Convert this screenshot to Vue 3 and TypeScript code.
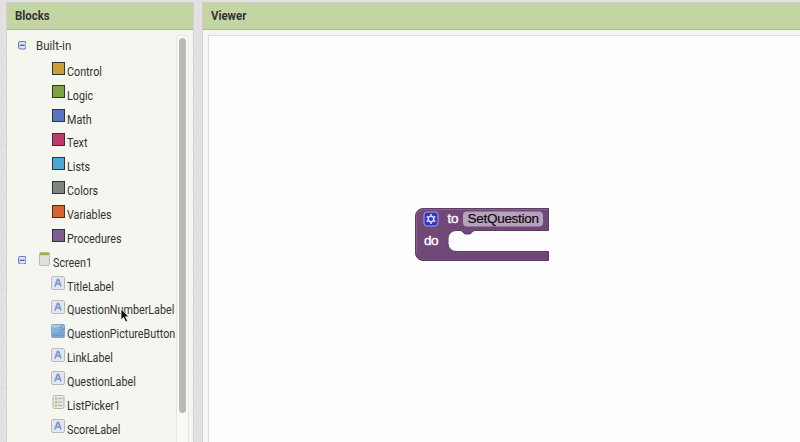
<script setup lang="ts">
type Icon = 'label' | 'image' | 'list'

interface Drawer {
  name: string
  color: string
}

interface Component {
  name: string
  icon: Icon
}

const builtIns: Drawer[] = [
  { name: 'Control', color: '#cb9d3b' },
  { name: 'Logic', color: '#7ba43f' },
  { name: 'Math', color: '#5c75c3' },
  { name: 'Text', color: '#bd3a6b' },
  { name: 'Lists', color: '#4fa6d5' },
  { name: 'Colors', color: '#818582' },
  { name: 'Variables', color: '#d9602f' },
  { name: 'Procedures', color: '#825c8d' },
]

const components: Component[] = [
  { name: 'TitleLabel', icon: 'label' },
  { name: 'QuestionNumberLabel', icon: 'label' },
  { name: 'QuestionPictureButton', icon: 'image' },
  { name: 'LinkLabel', icon: 'label' },
  { name: 'QuestionLabel', icon: 'label' },
  { name: 'ListPicker1', icon: 'list' },
  { name: 'ScoreLabel', icon: 'label' },
]
</script>

<template>
  <div class="editor">
    <section class="panel blocks">
      <h2 class="title"><span>Blocks</span></h2>
      <div class="body">
        <div class="tree">
          <div class="row root first">
            <svg class="toggle" viewBox="0 0 9 9"><rect x=".6" y=".6" width="7.8" height="7.8" rx="2" /><path d="M2 4.5h5" /></svg>
            <span class="name">Built-in</span>
          </div>
          <div v-for="d in builtIns" :key="d.name" class="row leaf">
            <span class="swatch" :style="{ backgroundColor: d.color }"></span>
            <span class="name">{{ d.name }}</span>
          </div>
          <div class="row root">
            <svg class="toggle" viewBox="0 0 9 9"><rect x=".6" y=".6" width="7.8" height="7.8" rx="2" /><path d="M2 4.5h5" /></svg>
            <svg class="screen" viewBox="0 0 11 14">
              <rect x=".5" y=".5" width="10" height="13" rx="1" fill="#dfe2dc" stroke="#b9bbb5" />
              <path d="M1 .7h9v2.5H1z" fill="#abae3c" />
            </svg>
            <span class="name">Screen1</span>
          </div>
          <div v-for="c in components" :key="c.name" class="row leaf">
            <svg v-if="c.icon === 'label'" class="icon" viewBox="0 0 14 14">
              <rect x=".5" y=".5" width="13" height="13" rx="1.5" fill="#e4e7ec" stroke="#b8b9bc" />
              <path d="M4 10.5 6.4 3.6h1.2L10 10.5M5 8h4" fill="none" stroke="#7598d0" stroke-width="1.7" />
            </svg>
            <svg v-else-if="c.icon === 'image'" class="icon" viewBox="0 0 14 14">
              <rect x=".5" y=".5" width="13" height="13" rx="1" fill="#8fb9dc" stroke="#8aa6c4" />
              <path d="M1 9.5 4 7l2 1.2L9 5l4-2v10H1z" fill="#78a5d3" />
              <path d="M1 1h9L8 3 6.5 2.5 4 4 1 3z" fill="#a9c9e1" />
              <path d="m6 6 1-1m2-2 1 1m1-3 1 1M3 5h1" stroke="#4e83b8" />
              <path d="M1 11.5h12" stroke="#7893bd" />
            </svg>
            <svg v-else class="icon" viewBox="0 0 14 14">
              <rect x="2" y=".5" width="11" height="13" rx="1.5" fill="#e6e8e3" stroke="#b6b8b3" />
              <path d="M4 3.5h2M4 7h2M4 10.5h2" stroke="#a3c75e" stroke-width="2" />
              <path d="M7 3.5h4.5M7 7h4.5M7 10.5h4.5" stroke="#a9aca8" />
            </svg>
            <span class="name">{{ c.name }}</span>
          </div>
        </div>
        <div class="track"><div class="thumb"></div></div>
      </div>
    </section>

    <section class="panel viewer">
      <h2 class="title"><span>Viewer</span></h2>
      <div class="workspace">
        <svg class="procedure" width="136" height="56" viewBox="414 206 136 56">
          <path d="M423 208.5H548.5V230.5H474l-4 3.5h-5l-4-3.5H456a8 8 0 0 0-8 8v5a8 8 0 0 0 8 8H548.5V260.5H423a7.5 7.5 0 0 1-7.5-7.5V216a7.5 7.5 0 0 1 7.5-7.5z" fill="#714979" stroke="#5c3b64" />
          <path d="M416.5 253V216a6.5 6.5 0 0 1 6.5-6.5H548" fill="none" stroke="#8c6a92" stroke-width=".7" />
          <rect x="424" y="212" width="14" height="14" rx="3" fill="#3434c0" stroke="#a8a2dc" />
          <g stroke="#d9d9ff" fill="none">
            <circle cx="431" cy="219" r="2.8" stroke-width="1.5" />
            <path d="M431 214v1.7m0 6.6v1.7M426.7 216.5l1.4.8m5.8 3.4 1.4.8m0-5-1.4.8m-5.8 3.4-1.4.8" stroke-width="1.7" />
          </g>
          <rect x="463" y="211.5" width="80" height="15" rx="4" fill="#b7a1bc" />
          <text class="word" x="447.5" y="223.4" textLength="11">to</text>
          <text class="field" x="467.5" y="223.4" textLength="71.5">SetQuestion</text>
          <text class="word" x="424" y="245.4" textLength="14.5">do</text>
        </svg>
      </div>
    </section>

    <svg class="cursor" viewBox="0 0 10 15">
      <path d="M1 .8v11l2.6-2.3 2 4.500 2-.9-2-4.300H9z" fill="#111" stroke="#f5f5f2" stroke-width=".8" />
    </svg>
  </div>
</template>

<style>
body {
  overflow: hidden;
}
</style>

<style scoped>
.editor {
  position: relative;
  box-sizing: border-box;
  display: grid;
  grid-template-columns: 188px 1fr;
  column-gap: 8px;
  height: 442px;
  padding: 2px 0 0 6px;
  overflow: hidden;
  background-color: #e2e0e2;
  background-image:
    radial-gradient(circle at 2px 3px, #dbd9db 0 0.6px, transparent 1.2px),
    radial-gradient(circle at 5px 8px, #e8e6e8 0 0.8px, transparent 1.4px);
  background-size: 7px 11px, 9px 13px;
  font-family: Roboto, sans-serif;
  font-size: 12px;
  color: #333;
}

.panel {
  display: flex;
  flex-direction: column;
  min-width: 0;
  min-height: 0;
  box-sizing: border-box;
  border: 1px solid #d0d0cd;
  border-bottom: 0;
  background: #f5f6ef;
}

.viewer {
  border-right: 0;
}

.title {
  flex: none;
  box-sizing: border-box;
  height: 27px;
  margin: 0;
  padding-left: 8px;
  border-bottom: 1px solid #afbb9d;
  background: #c4d5a4;
  font-size: 12px;
  font-weight: 700;
  line-height: 27px;
}

.title span {
  display: inline-block;
  transform: scaleX(0.95);
  transform-origin: left;
}

.body {
  display: flex;
  flex: 1;
  min-height: 0;
  padding-top: 5px;
}

.tree {
  flex: none;
  width: 169px;
}

.row {
  display: flex;
  align-items: flex-start;
  height: 23.87px;
  white-space: nowrap;
}

.name {
  padding-top: 3.2px;
  line-height: 16px;
  transform: scaleX(0.897);
  transform-origin: left;
}

.first {
  height: 25.6px;
}

.first .name {
  margin-left: 9.5px;
  padding-top: 3px;
  transform: scaleX(0.96);
}

.toggle {
  flex: none;
  width: 8.5px;
  height: 8.5px;
  margin: 4.4px 0 0 10.7px;
  fill: #e0e4f5;
  stroke: #6978c0;
  stroke-width: 1.1;
}

.first .toggle {
  margin-top: 6px;
}

.toggle path {
  stroke: #2735a0;
}

.screen {
  flex: none;
  width: 11px;
  height: 14px;
  margin: 0.6px 3px 0 12.7px;
}

.leaf {
  padding-left: 44px;
}

.swatch {
  box-sizing: border-box;
  flex: none;
  width: 13px;
  height: 13px;
  margin: 1px 2.2px 0 1px;
  border: 1px solid #2b3637;
}

.icon {
  flex: none;
  width: 14px;
  height: 14px;
  margin: 0.7px 2.2px 0 0;
}

.track {
  box-sizing: border-box;
  width: 13px;
  border: 1px solid #e6e6e4;
  border-bottom: 0;
  background: #f9f9f8;
}

.thumb {
  width: 7px;
  height: 375px;
  margin: 2px 0 0 2px;
  border-radius: 4px;
  background: #b9b9b8;
}

.workspace {
  flex: 1;
  box-sizing: border-box;
  margin: 5px 0 0 5px;
  padding: 170px 0 0 205px;
  border: 1px solid #dcdcda;
  border-right: 0;
  border-bottom: 0;
  background: #fefdfe;
}

.procedure {
  display: block;
}

.word,
.field {
  font-family: "Liberation Sans", Arial, sans-serif;
  font-size: 13.5px;
  fill: #fff;
}

.word {
  stroke: #fff;
  stroke-width: 0.4;
}

.field {
  fill: #080808;
  stroke: #080808;
  stroke-width: 0.15;
}

.cursor {
  position: absolute;
  left: 119.5px;
  top: 308px;
  width: 10px;
  height: 15px;
}
</style>
